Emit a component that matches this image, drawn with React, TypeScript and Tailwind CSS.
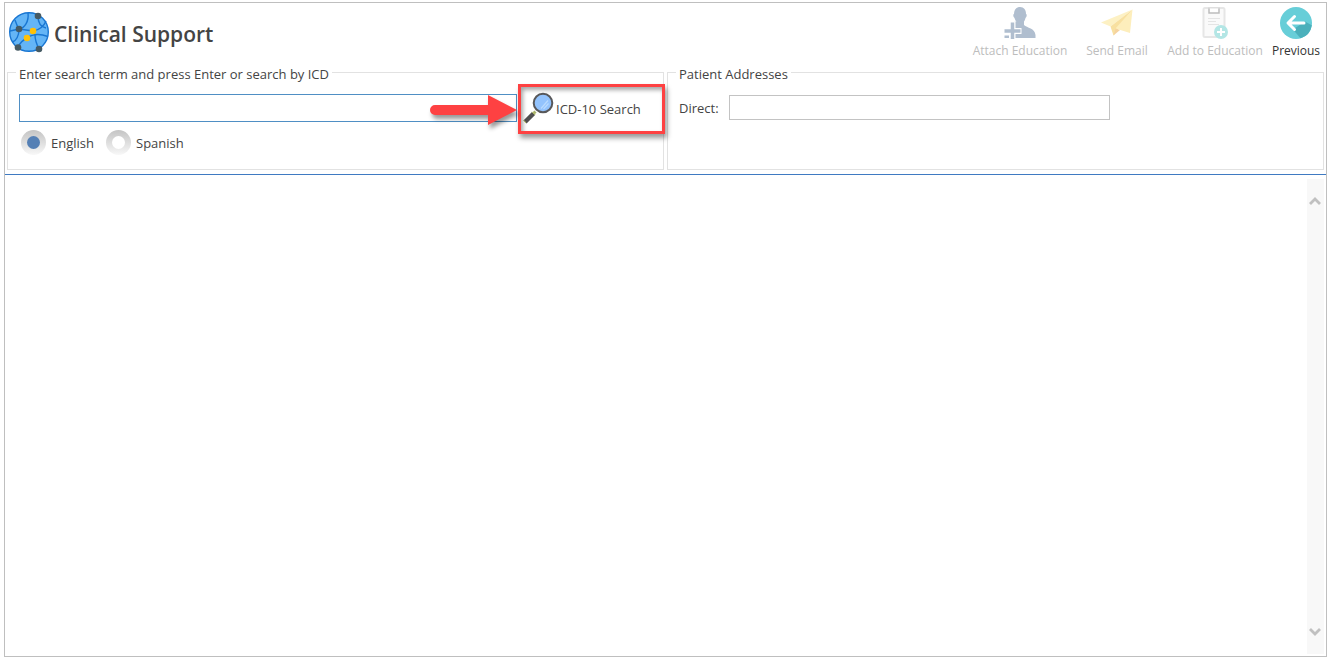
import { useState, type ReactNode } from "react";

function GlobeIcon() {
  return (
    <svg viewBox="0 0 42 42" className="size-[42px] shrink-0" aria-hidden="true">
      <circle cx="21" cy="21" r="19.3" fill="#64b5f6" stroke="#1976d2" strokeWidth="1.4" />
      <g fill="none" stroke="#1976d2" strokeWidth="1.4">
        <path d="M20 2C21 10 17 17 11 18" />
        <path d="M7 9C8 12 9 15 11 18C11 25 8 30 4.500 31" />
        <path d="M2 20L11 18L25 20C31 19 36 15 38 10" />
        <path d="M30 5C30 12 33 16 38 17" />
        <path d="M19 27C25 22.500 33 23 40 25.500" />
        <path d="M19 27C15 29 12 32 10 36" />
        <path d="M27 24C27 30 29 34 31 38" />
      </g>
      <g fill="#455a64">
        <circle cx="30" cy="5" r="3.300" />
        <circle cx="11" cy="18" r="3.300" />
        <circle cx="10" cy="36.500" r="3.300" />
        <circle cx="31" cy="38" r="3.300" />
      </g>
      <circle cx="25" cy="20" r="3.300" fill="#ffc107" />
      <circle cx="19" cy="27" r="3.300" fill="#ffc107" />
    </svg>
  );
}

function AttachIcon() {
  return (
    <svg viewBox="0 0 32 32" className="size-8" aria-hidden="true">
      <path
        d="M16 0C20 0 22 3 22 7C23 7 23 10 21.500 11C21 13 20.500 14 20 14.500V18C23 21 31 21 31.500 28V31H10V15L12.500 14.500C11.500 14 11 12 10.500 11C9 10 9 7 10 7C10 3 12 0 16 0Z"
        fill="#b0becf"
      />
      <path d="M8.500 15V32M0 24H17.500" stroke="#fff" strokeWidth="6" />
      <path d="M8.500 15.500V32M0.500 24H16.500" stroke="#b0becf" strokeWidth="3.500" />
      <path d="M0.500 28.500H5V31H0.500ZM12 28.500H22V31H12Z" fill="#b0becf" />
    </svg>
  );
}

function SendIcon() {
  return (
    <svg viewBox="0 0 32 32" className="size-8" aria-hidden="true">
      <path d="M31.500 2.500L0 15.500L9.500 19.500Z" fill="#fdf1c4" />
      <path d="M31.500 2.500L9.500 19.500L12.500 28.500Z" fill="#f8e0a0" />
      <path d="M31.500 2.500L14.500 21.500L29 26Z" fill="#fdeebc" />
      <path d="M14.500 21.500L12.500 28.500L19 23Z" fill="#f5d3a0" />
    </svg>
  );
}

function ClipboardIcon() {
  return (
    <svg viewBox="0 0 32 32" className="size-8" aria-hidden="true">
      <rect x="4.500" y="1" width="21" height="29" rx="1.500" fill="#fafafa" stroke="#e6e6e6" strokeWidth="2" />
      <path d="M10 1V6H20V1" fill="#fff" stroke="#bdbdbd" strokeWidth="1.500" />
      <path d="M9 0.750H21" stroke="#dedede" strokeWidth="1.500" />
      <path d="M9 11.500H21M9 14.500H17M9 17.500H20" stroke="#e4e4e4" strokeWidth="1.200" />
      <circle cx="22" cy="25" r="7" fill="#b3e6e5" />
      <path d="M22 21V29M18 25H26" stroke="#fff" strokeWidth="2" />
    </svg>
  );
}

function PreviousIcon() {
  return (
    <svg viewBox="0 0 32 32" className="size-8" aria-hidden="true">
      <circle cx="16" cy="16" r="16" fill="#67ced8" />
      <path d="M13 22.500L20.500 31.300A16 16 0 0 0 31.800 18.200L25 14.500Z" fill="#4bb0bb" />
      <path d="M24 16H8.500M14.500 9.500L8 16L14.500 22.500" fill="none" stroke="#fff" strokeWidth="3" strokeLinecap="round" strokeLinejoin="round" />
    </svg>
  );
}

function MagnifierIcon() {
  return (
    <svg viewBox="0 0 32 32" className="size-8 shrink-0" aria-hidden="true">
      <path d="M12.500 19.500L9.500 22.500" stroke="#a9b36a" strokeWidth="3" />
      <path d="M10.500 21.500L2 30" stroke="#505050" strokeWidth="4.500" />
      <path d="M9.200 19.800L12.200 22.800M0.800 28.200L3 31" stroke="#c2cc70" strokeWidth="1" />
      <circle cx="20" cy="11" r="9.300" fill="#93c3fd" stroke="#58585a" strokeWidth="2" />
      <path d="M18 16.500L25 8.500M20.500 17L25.500 11.500" stroke="#b9dafe" strokeWidth="1.200" />
    </svg>
  );
}

function Callout() {
  return (
    <>
      <span className="pointer-events-none absolute -top-2.5 -right-0.5 -bottom-3 left-0 border-3 border-[#fe4142] shadow-[2px_4px_5px_rgba(0,0,0,0.4),inset_2px_3px_4px_rgba(0,0,0,0.35)]" />
      <svg
        viewBox="0 0 88 32"
        className="pointer-events-none absolute top-0 right-full h-8 w-[88px] overflow-visible drop-shadow-[2px_4px_2px_rgba(0,0,0,0.4)]"
        aria-hidden="true"
      >
        <path d="M5 11H58V1L87 16L58 31V21H5A5 5 0 0 1 5 11Z" fill="#fe4142" />
      </svg>
    </>
  );
}

function ToolButton({ icon, label, width, disabled }: { icon: ReactNode; label: string; width: string; disabled?: boolean }) {
  return (
    <button
      type="button"
      disabled={disabled}
      className={`${width} flex flex-col items-center gap-1 pt-1 text-xs leading-4 whitespace-nowrap text-[#333] disabled:text-[#bdbdbd]`}
    >
      {icon}
      {label}
    </button>
  );
}

function LanguageOption({ label, checked, onSelect }: { label: string; checked: boolean; onSelect: () => void }) {
  return (
    <label className="flex items-center gap-[5px]">
      <span className="grid size-[25px] place-items-center rounded-full bg-linear-to-b from-[#c4c4c4] to-[#f8f8f8]">
        <input
          type="radio"
          name="language"
          checked={checked}
          onChange={onSelect}
          className="size-[13px] appearance-none rounded-full bg-white checked:bg-[#5580b5]"
        />
      </span>
      {label}
    </label>
  );
}

function ScrollArrow({ label, path }: { label: string; path: string }) {
  return (
    <button type="button" aria-label={label} className="flex h-11 items-center pl-0.5">
      <svg viewBox="0 0 12 10" className="h-2.5 w-3" aria-hidden="true">
        <path d={path} fill="none" stroke="#c0c0c0" strokeWidth="2.800" />
      </svg>
    </button>
  );
}

export default function App() {
  const [language, setLanguage] = useState("English");

  return (
    <div className="flex min-h-screen bg-white pt-0.5 pr-[3px] pb-[3px] pl-1 font-['Open_Sans',sans-serif] text-[13px] leading-5 text-[#444]">
      <div className="flex flex-1 flex-col border border-[#bfbfbf]">
        <header className="flex h-[57px] justify-between">
          <div className="flex items-start gap-1 pt-2 pl-[3px]">
            <GlobeIcon />
            <h1 className="pt-[9px] text-[21px] leading-7 font-semibold whitespace-nowrap">Clinical Support</h1>
          </div>
          <div className="flex items-start">
            <ToolButton icon={<AttachIcon />} label="Attach Education" width="w-[100px]" disabled />
            <ToolButton icon={<SendIcon />} label="Send Email" width="w-[94px]" disabled />
            <ToolButton icon={<ClipboardIcon />} label="Add to Education" width="w-[102px]" disabled />
            <ToolButton icon={<PreviousIcon />} label="Previous" width="w-[60px]" />
          </div>
        </header>

        <div className="grid grid-cols-2 gap-[3px] px-0.5 pb-1">
          <fieldset className="min-w-0 border border-[#e2e2e2] pb-3.5">
            <legend className="ml-2 px-[3px] pt-1">Enter search term and press Enter or search by ICD</legend>
            <div className="mt-2.5 flex pl-[11px]">
              <input
                type="text"
                aria-label="Search term"
                className="h-7 min-w-0 flex-1 border border-[#4f8fc4] bg-white px-1 outline-none"
              />
              <div className="relative ml-px h-7 w-[145px]">
                <button type="button" className="-mt-0.5 flex items-center gap-px pl-[5px] whitespace-nowrap">
                  <MagnifierIcon />
                  <span className="pt-0.5">ICD-10 Search</span>
                </button>
                <Callout />
              </div>
            </div>
            <div className="mt-2 flex gap-3 pl-[13px]">
              <LanguageOption label="English" checked={language === "English"} onSelect={() => setLanguage("English")} />
              <LanguageOption label="Spanish" checked={language === "Spanish"} onSelect={() => setLanguage("Spanish")} />
            </div>
          </fieldset>

          <fieldset className="min-w-0 border border-[#e2e2e2]">
            <legend className="ml-2 px-[3px] pt-1">Patient Addresses</legend>
            <div className="mt-[11px] flex items-center gap-2.5 pl-[11px]">
              <label htmlFor="direct">Direct:</label>
              <input id="direct" type="text" className="h-[25px] w-[381px] border border-[#c3c3c3] bg-white px-1 outline-none" />
            </div>
          </fieldset>
        </div>

        <main className="flex flex-1 justify-end border-t border-[#3f7ac2] pt-1 pr-0.5 pb-0.5">
          <div className="flex w-[17px] flex-col justify-between bg-[#f8f8f8]">
            <ScrollArrow label="Scroll up" path="M1 8L6 3L11 8" />
            <ScrollArrow label="Scroll down" path="M1 2L6 7L11 2" />
          </div>
        </main>
      </div>
    </div>
  );
}
